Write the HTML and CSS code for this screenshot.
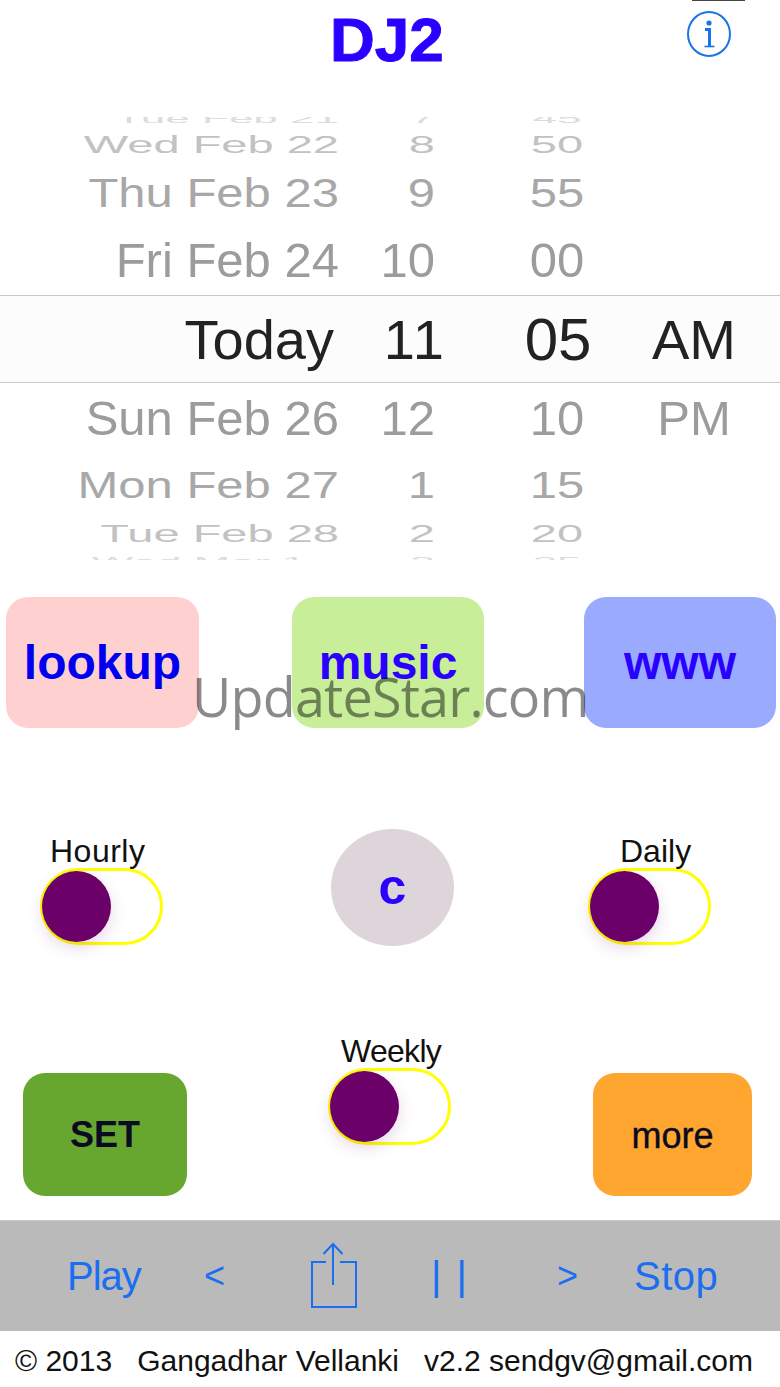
FILE: index.html
```html
<!DOCTYPE html>
<html lang="en">
<head>
    <meta charset="UTF-8">
    <title>DJ2</title>
    <link rel="stylesheet" href="styles.css">
</head>
<body>
    <div class="app">
        <div class="status"><div class="status-battery"></div></div>
        <header class="header">
            <h1 class="title">DJ2</h1>
            <svg class="info-icon" width="45" height="47" viewBox="0 0 45 47" fill="none" stroke="#1a73e8">
                <ellipse cx="22" cy="23" rx="21" ry="22" stroke-width="2"/>
                <circle cx="22" cy="12" r="2.6" fill="#1a73e8" stroke="none"/>
                <path d="M18 18.5h4.5v17" stroke-width="3"/>
                <path d="M17.5 35.5h10" stroke-width="1.6"/>
            </svg>
        </header>

        <div class="picker">
            <div class="row row-far row-first"><span>Tue Feb 21</span><span>7</span><span class="minute">45</span><span></span></div>
            <div class="row row-edge"><span>Wed Feb 22</span><span>8</span><span class="minute">50</span><span></span></div>
            <div class="row row-thu"><span>Thu Feb 23</span><span>9</span><span class="minute">55</span><span></span></div>
            <div class="row row-near row-fri"><span>Fri Feb 24</span><span>10</span><span class="minute">00</span><span></span></div>
            <div class="row row-today"><span class="today-date">Today</span><span class="today-hour">11</span><span class="minute">05</span><span class="ampm">AM</span></div>
            <div class="row row-near row-sun"><span>Sun Feb 26</span><span>12</span><span class="minute">10</span><span class="ampm">PM</span></div>
            <div class="row row-mon"><span>Mon Feb 27</span><span>1</span><span class="minute">15</span><span></span></div>
            <div class="row row-edge row-tue"><span>Tue Feb 28</span><span>2</span><span class="minute">20</span><span></span></div>
            <div class="row row-far"><span class="date-short">Wed Mar 1</span><span>3</span><span class="minute">25</span><span></span></div>
        </div>

        <div class="top-buttons">
            <button class="tile tile-lookup">lookup</button>
            <button class="tile tile-music">music</button>
            <button class="tile tile-www">www</button>
        </div>

        <div class="middle">
            <div class="switch-group">
                <div class="switch-label label-hourly">Hourly</div>
                <div class="switch"><div class="knob"></div></div>
            </div>
            <button class="clear-btn">c</button>
            <div class="switch-group">
                <div class="switch-label label-daily">Daily</div>
                <div class="switch"><div class="knob"></div></div>
            </div>
        </div>

        <div class="lower">
            <button class="tile tile-set">SET</button>
            <div class="switch-group">
                <div class="switch-label label-weekly">Weekly</div>
                <div class="switch"><div class="knob"></div></div>
            </div>
            <button class="tile tile-more">more</button>
        </div>

        <nav class="toolbar">
            <span class="tool-play">Play</span>
            <span class="tool-arrow">&lt;</span>
            <svg class="share-icon" width="48" height="66" viewBox="0 0 48 66" fill="none" stroke="#1a6ff0" stroke-width="2">
                <path d="M16 20H2v45h44V20H30"/>
                <path d="M23 1.5V43M13.500 12 23 2l9.500 10"/>
            </svg>
            <span class="pause">| |</span>
            <span class="tool-arrow">&gt;</span>
            <span class="tool-stop">Stop</span>
        </nav>

        <footer class="footer">© 2013   Gangadhar Vellanki   v2.2 sendgv@gmail.com</footer>

        <div class="watermark">UpdateStar.com</div>
    </div>
</body>
</html>
```

FILE: styles.css
```css
* {
    box-sizing: border-box;
}

body {
    margin: 0;
    background: white;
    font-family: "Liberation Sans", Arial, sans-serif;
}

.app {
    position: relative;
    width: 780px;
    height: 1387px;
    overflow: hidden;
}

.status {
    height: 2px;
    padding-left: 692px;
}

.status-battery {
    width: 53px;
    height: 1px;
    background-color: #444;
}

.header {
    display: flex;
    justify-content: space-between;
    height: 115px;
    padding: 9px 48px 0 330px;
}

.title {
    margin: 0;
    color: #2a00ff;
    font-size: 62px;
    font-weight: bold;
    line-height: 58px;
    -webkit-text-stroke: 1px #2a00ff;
}

/* picker wheel */
.picker {
    height: 443px;
    overflow: hidden;
}

.row {
    display: grid;
    grid-template-columns: 339px 96px 173px 172px;
    align-items: center;
    color: #a8a8a8;
    font-size: 49px;
    white-space: nowrap;
}

.row span {
    display: block;
    text-align: right;
}

.row .minute {
    padding-left: 71px;
    text-align: center;
}

.row .ampm {
    text-align: center;
}

.row-first {
    margin-top: -11px;
    margin-bottom: 2px;
}

.row-far {
    height: 24px;
    color: #dcdcdc;
    font-size: 44px;
    line-height: 24px;
}

.row-far span {
    transform: scaleY(0.3);
}

.row-edge {
    height: 25px;
    color: #c2c2c2;
    font-size: 47px;
    line-height: 25px;
}

.row-edge span {
    transform: scaleY(0.5);
}

.row-thu {
    height: 71px;
}

.row-thu span {
    transform: scaleY(0.83);
}

.row-near {
    color: #9c9c9c;
}

.row-fri {
    height: 64px;
    margin-bottom: 3px;
}

.row-today {
    height: 88px;
    color: #222;
    font-size: 56px;
    background-color: #fcfcfc;
    border-top: 1px solid #c8c8c8;
    border-bottom: 1px solid #c8c8c8;
}

.row-today .today-date {
    padding-right: 5px;
}

.row-today .today-hour {
    margin-right: -7px;
    font-kerning: none;
    letter-spacing: -2px;
}

.row-today .minute {
    padding-left: 73px;
    font-size: 60px;
}

.row-sun {
    height: 69px;
}

.row-mon {
    height: 66px;
}

.row-mon span {
    transform: scaleY(0.77);
}

.row-tue {
    height: 31px;
    line-height: 31px;
}

.date-short {
    padding-right: 33px;
}

/* buttons */
.tile {
    border: none;
    border-radius: 22px;
    padding: 0;
    font-family: inherit;
    font-weight: bold;
    color: #2a00ff;
}

.top-buttons {
    display: grid;
    grid-template-columns: 286px 292px 1fr;
    padding: 37px 0 0 6px;
}

.tile-lookup,
.tile-music,
.tile-www {
    height: 131px;
    padding-bottom: 1px;
    font-size: 48px;
}

.tile-lookup {
    width: 193px;
    color: #0000f0;
    background-color: #ffd0d0;
}

.tile-music {
    width: 192px;
    background-color: #c8ee9a;
}

.tile-www {
    width: 192px;
    background-color: #9aabff;
}

.middle {
    display: grid;
    grid-template-columns: 291px 257px 1fr;
    align-items: start;
    padding: 101px 0 0 40px;
}

.middle .switch-group {
    margin-top: 7px;
}

.switch-group {
    width: 123px;
}

.switch-label {
    height: 30px;
    margin-bottom: 2px;
    color: #111;
    font-size: 32px;
    line-height: 30px;
    white-space: nowrap;
}

.label-hourly {
    padding-left: 10px;
    letter-spacing: 0.5px;
}

.label-daily {
    padding-left: 32px;
}

.label-weekly {
    padding-left: 13px;
    letter-spacing: -0.7px;
}

.switch {
    width: 123px;
    height: 77px;
    border: 3px solid #ffff00;
    border-radius: 39px;
    background-color: white;
}

.knob {
    width: 69px;
    height: 71px;
    margin-left: -1px;
    border-radius: 50%;
    background-color: #6b0068;
    box-shadow: 0 6px 16px rgba(107, 0, 104, 0.16);
}

.clear-btn {
    width: 123px;
    height: 117px;
    border: none;
    border-radius: 50%;
    padding: 0 0 2px;
    background-color: #ddd5da;
    color: #2a00ff;
    font-family: inherit;
    font-size: 50px;
    font-weight: bold;
}

.lower {
    display: grid;
    grid-template-columns: 305px 265px 1fr;
    align-items: start;
    padding: 90px 0 0 23px;
}

.tile-set,
.tile-more {
    height: 123px;
    margin-top: 37px;
    color: #0a0a20;
}

.tile-set {
    width: 164px;
    background-color: #68a72f;
    font-size: 36px;
}

.tile-more {
    width: 159px;
    padding-top: 3px;
    background-color: #ffa631;
    font-size: 36px;
    font-weight: normal;
    -webkit-text-stroke: 0.4px #0a0a20;
}

/* toolbar */
.toolbar {
    display: grid;
    grid-template-columns: 137px 106px 123px 124px 77px 1fr;
    align-items: center;
    height: 111px;
    margin-top: 24px;
    padding-left: 67px;
    background-color: #bababa;
    border-top: 1px solid #c9c9c9;
    color: #1a6ff0;
    font-size: 40px;
}

.tool-play {
    letter-spacing: -1px;
}

.tool-stop {
    letter-spacing: 0.5px;
}

.tool-arrow {
    font-size: 36px;
}

.pause {
    margin-left: -2px;
    padding-top: 1px;
    letter-spacing: 2px;
}

.share-icon {
    margin-top: -2px;
}

.footer {
    padding: 13px 0 0 15px;
    color: #111;
    font-size: 30px;
    white-space: pre;
}

.watermark {
    position: absolute;
    top: 659px;
    left: 192px;
    color: rgba(0, 0, 0, 0.46);
    font-family: "Open Sans", sans-serif;
    font-size: 54px;
    letter-spacing: -0.85px;
    line-height: 74px;
    white-space: nowrap;
}
```
